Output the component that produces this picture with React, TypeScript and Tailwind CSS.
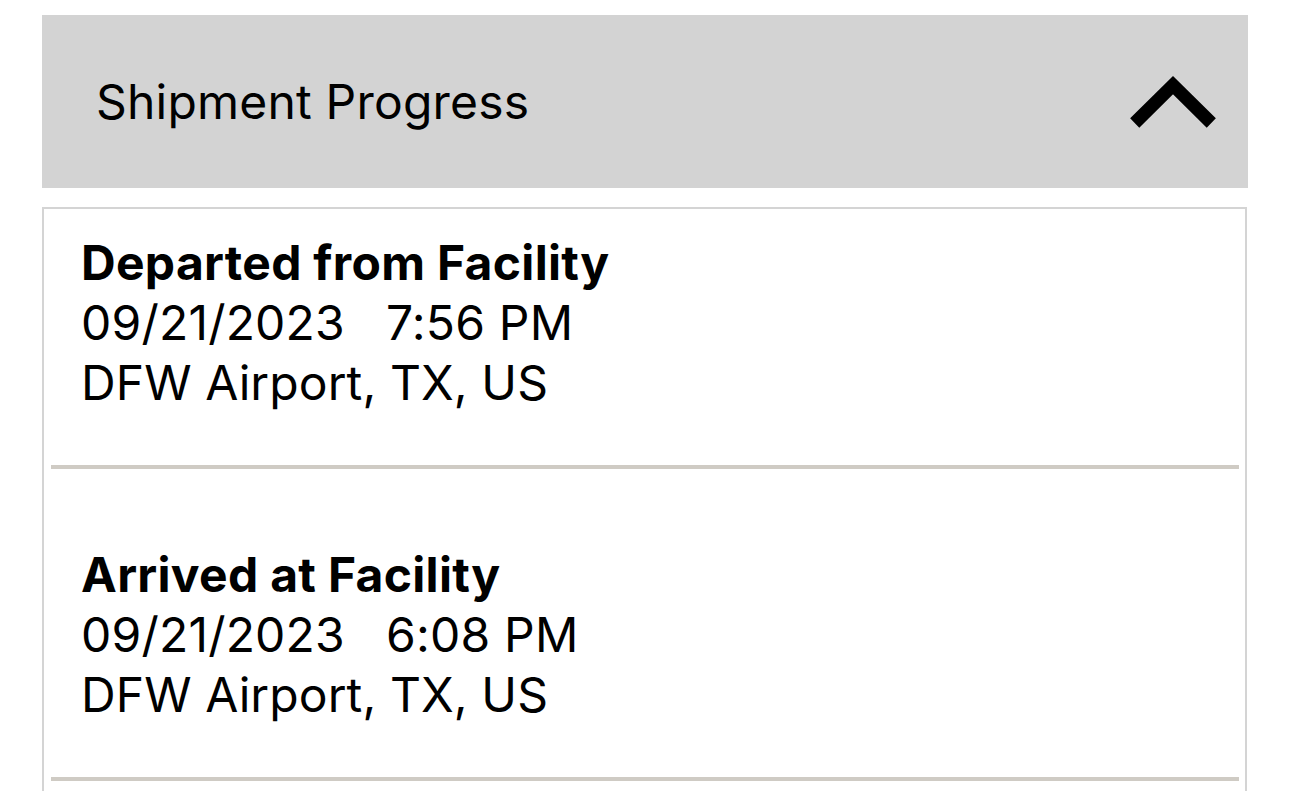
const events = [
  { title: "Departed from Facility", date: "09/21/2023", time: "7:56 PM", place: "DFW Airport, TX, US", pt: "pt-[24px]" },
  { title: "Arrived at Facility", date: "09/21/2023", time: "6:08 PM", place: "DFW Airport, TX, US", pt: "pt-[76px]" },
]

const App = () => {
  return (
    <div className="w-[1290px] h-[791px] overflow-hidden bg-white pt-[15px] text-black" style={{ fontFamily: "Inter, 'Noto Sans', sans-serif" }}>
      {/* header */}
      <div className="ml-[42px] w-[1206px] h-[173px] bg-[#d3d3d3] flex items-center justify-between pl-[54px] pr-[29px]">
        <span className="text-[48px] leading-none tracking-[0.2px]">Shipment Progress</span>
        <svg width="92" height="60" viewBox="0 0 92 60">
          <polyline points="7.7,51 46,13.2 84.3,51" fill="none" stroke="#000" strokeWidth="13" strokeLinejoin="miter" strokeLinecap="butt" />
        </svg>
      </div>

      {/* events */}
      <div className="ml-[42px] w-[1205px] mt-[19px] border-2 border-b-0 border-[#d4d4d4] h-[600px]">
        {events.map((e) => (
          <div key={e.title}>
            <div className={`${e.pt} pb-[52px] pl-[37px] text-[48px] leading-[60px]`}>
              <div className="font-bold tracking-[0.3px]">{e.title}</div>
              <div className="whitespace-pre tracking-[0.2px]">{e.date + "   " + e.time}</div>
              <div className="tracking-[0.1px]">{e.place}</div>
            </div>
            <div className="ml-[7px] mr-[6px] h-[4px] bg-[#cfcbc4]" />
          </div>
        ))}
      </div>
    </div>
  )
}

export default App
